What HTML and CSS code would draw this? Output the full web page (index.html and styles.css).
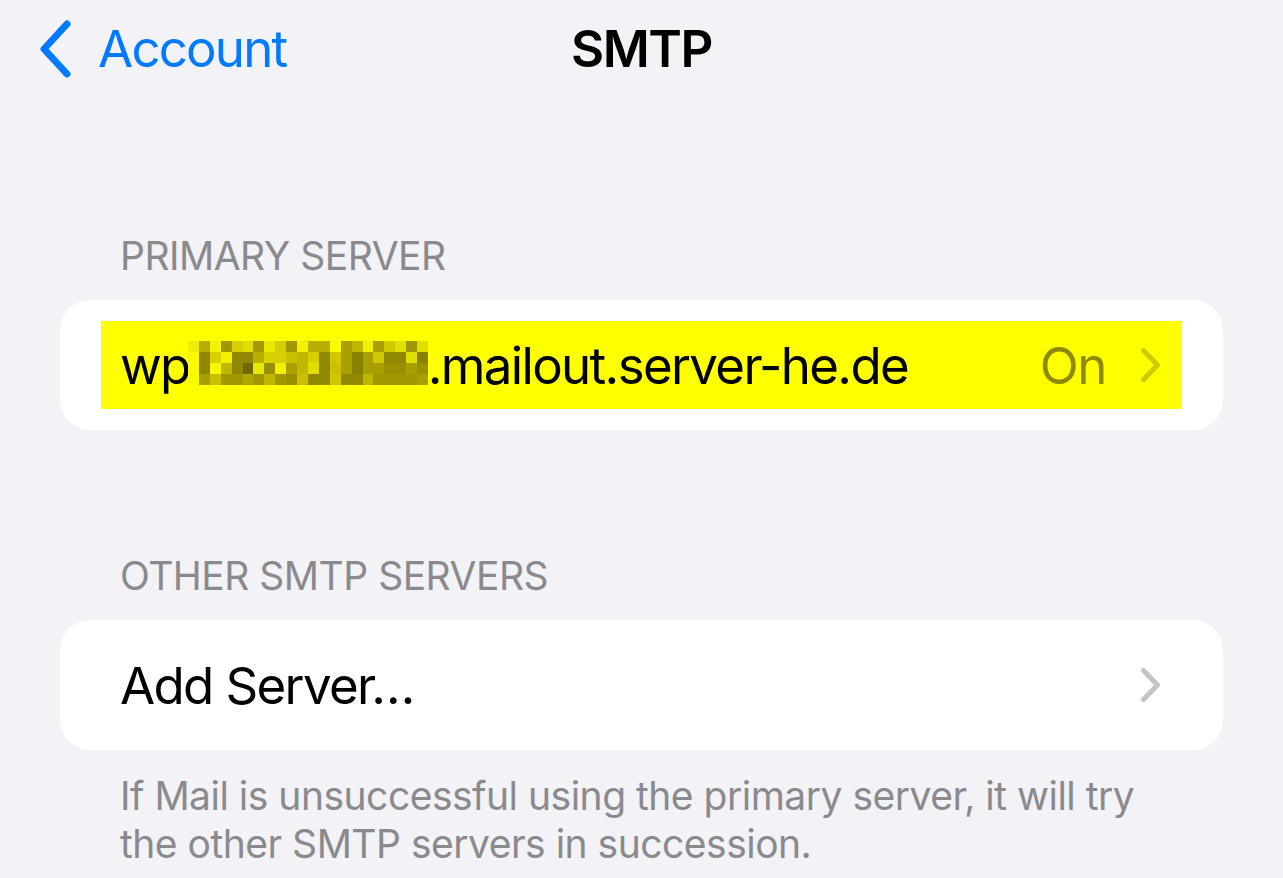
FILE: index.html
```html
<!doctype html>
<html lang="en">
<head>
    <meta charset="UTF-8">
    <meta name="viewport" content="width=device-width, initial-scale=1.0">
    <title>SMTP</title>
    <link rel="stylesheet" href="styles.css">
</head>
<body>
<div class="screen">
    <header class="nav">
        <a class="back">
            <svg class="back-icon" viewBox="0 0 36 58"><polyline points="30,4 7,29 30,54"/></svg>
            <span>Account</span>
        </a>
        <h1 class="title">SMTP</h1>
        <span></span>
    </header>

    <section class="group group-first">
        <h2 class="group-header">PRIMARY SERVER</h2>
        <div class="card">
            <div class="row row-marked">
                <span class="row-label">wp<svg class="redacted" viewBox="0 0 22 4" preserveAspectRatio="none">
                    <g>
                        <rect x="0" y="0" width="1" height="1" fill="#eeee00"/><rect x="1" y="0" width="1" height="1" fill="#b5ad00"/>
                        <rect x="2" y="0" width="1" height="1" fill="#f3f300"/><rect x="3" y="0" width="1" height="1" fill="#a09800"/>
                        <rect x="4" y="0" width="1" height="1" fill="#d8d000"/><rect x="5" y="0" width="1" height="1" fill="#e0e000"/>
                        <rect x="6" y="0" width="1" height="1" fill="#a09a00"/><rect x="7" y="0" width="1" height="1" fill="#e8e800"/>
                        <rect x="8" y="0" width="1" height="1" fill="#d5cc00"/><rect x="9" y="0" width="1" height="1" fill="#a09a00"/>
                        <rect x="10" y="0" width="1" height="1" fill="#f3f300"/><rect x="11" y="0" width="1" height="1" fill="#b8b000"/>
                        <rect x="12" y="0" width="1" height="1" fill="#b8b000"/><rect x="13" y="0" width="1" height="1" fill="#fbfb00"/>
                        <rect x="14" y="0" width="1" height="1" fill="#a8a000"/><rect x="15" y="0" width="1" height="1" fill="#c0b800"/>
                        <rect x="16" y="0" width="1" height="1" fill="#f0f000"/><rect x="17" y="0" width="1" height="1" fill="#a8a000"/>
                        <rect x="18" y="0" width="1" height="1" fill="#d0c800"/><rect x="19" y="0" width="1" height="1" fill="#e0e000"/>
                        <rect x="20" y="0" width="1" height="1" fill="#a09800"/><rect x="21" y="0" width="1" height="1" fill="#e0e000"/>
                    </g>
                    <g>
                        <rect x="0" y="1" width="1" height="1" fill="#fafa00"/><rect x="1" y="1" width="1" height="1" fill="#908800"/>
                        <rect x="2" y="1" width="1" height="1" fill="#d8d000"/><rect x="3" y="1" width="1" height="1" fill="#f0f000"/>
                        <rect x="4" y="1" width="1" height="1" fill="#908800"/><rect x="5" y="1" width="1" height="1" fill="#908800"/>
                        <rect x="6" y="1" width="1" height="1" fill="#b8b000"/><rect x="7" y="1" width="1" height="1" fill="#d8d000"/>
                        <rect x="8" y="1" width="1" height="1" fill="#d8d000"/><rect x="9" y="1" width="1" height="1" fill="#c8c000"/>
                        <rect x="10" y="1" width="1" height="1" fill="#c0b800"/><rect x="11" y="1" width="1" height="1" fill="#d8d000"/>
                        <rect x="12" y="1" width="1" height="1" fill="#908800"/><rect x="13" y="1" width="1" height="1" fill="#d0c800"/>
                        <rect x="14" y="1" width="1" height="1" fill="#a8a000"/><rect x="15" y="1" width="1" height="1" fill="#888000"/>
                        <rect x="16" y="1" width="1" height="1" fill="#a8a000"/><rect x="17" y="1" width="1" height="1" fill="#d0c800"/>
                        <rect x="18" y="1" width="1" height="1" fill="#908800"/><rect x="19" y="1" width="1" height="1" fill="#908800"/>
                        <rect x="20" y="1" width="1" height="1" fill="#e0e000"/><rect x="21" y="1" width="1" height="1" fill="#888000"/>
                    </g>
                    <g>
                        <rect x="0" y="2" width="1" height="1" fill="#fafa00"/><rect x="1" y="2" width="1" height="1" fill="#908800"/>
                        <rect x="2" y="2" width="1" height="1" fill="#f8f800"/><rect x="3" y="2" width="1" height="1" fill="#c0b800"/>
                        <rect x="4" y="2" width="1" height="1" fill="#908800"/><rect x="5" y="2" width="1" height="1" fill="#6e6800"/>
                        <rect x="6" y="2" width="1" height="1" fill="#e8e800"/><rect x="7" y="2" width="1" height="1" fill="#989000"/>
                        <rect x="8" y="2" width="1" height="1" fill="#f0f000"/><rect x="9" y="2" width="1" height="1" fill="#a8a000"/>
                        <rect x="10" y="2" width="1" height="1" fill="#c0b800"/><rect x="11" y="2" width="1" height="1" fill="#e0e000"/>
                        <rect x="12" y="2" width="1" height="1" fill="#908800"/><rect x="13" y="2" width="1" height="1" fill="#c8c000"/>
                        <rect x="14" y="2" width="1" height="1" fill="#a8a000"/><rect x="15" y="2" width="1" height="1" fill="#888000"/>
                        <rect x="16" y="2" width="1" height="1" fill="#a8a000"/><rect x="17" y="2" width="1" height="1" fill="#a8a000"/>
                        <rect x="18" y="2" width="1" height="1" fill="#989000"/><rect x="19" y="2" width="1" height="1" fill="#989000"/>
                        <rect x="20" y="2" width="1" height="1" fill="#a8a000"/><rect x="21" y="2" width="1" height="1" fill="#989000"/>
                    </g>
                    <g>
                        <rect x="0" y="3" width="1" height="1" fill="#fafa00"/><rect x="1" y="3" width="1" height="1" fill="#a8a000"/>
                        <rect x="2" y="3" width="1" height="1" fill="#c8c000"/><rect x="3" y="3" width="1" height="1" fill="#a09800"/>
                        <rect x="4" y="3" width="1" height="1" fill="#a09800"/><rect x="5" y="3" width="1" height="1" fill="#b0a800"/>
                        <rect x="6" y="3" width="1" height="1" fill="#a09800"/><rect x="7" y="3" width="1" height="1" fill="#c0b800"/>
                        <rect x="8" y="3" width="1" height="1" fill="#a09800"/><rect x="9" y="3" width="1" height="1" fill="#989000"/>
                        <rect x="10" y="3" width="1" height="1" fill="#c8c000"/><rect x="11" y="3" width="1" height="1" fill="#908800"/>
                        <rect x="12" y="3" width="1" height="1" fill="#908800"/><rect x="13" y="3" width="1" height="1" fill="#d0c800"/>
                        <rect x="14" y="3" width="1" height="1" fill="#908800"/><rect x="15" y="3" width="1" height="1" fill="#908800"/>
                        <rect x="16" y="3" width="1" height="1" fill="#c0b800"/><rect x="17" y="3" width="1" height="1" fill="#a09800"/>
                        <rect x="18" y="3" width="1" height="1" fill="#a09800"/><rect x="19" y="3" width="1" height="1" fill="#a09800"/>
                        <rect x="20" y="3" width="1" height="1" fill="#a09800"/><rect x="21" y="3" width="1" height="1" fill="#a8a000"/>
                    </g>
                </svg>.mailout.server-he.de</span>
                <span class="row-value">On</span>
                <svg class="chevron" viewBox="0 0 21 36"><polyline points="3.5,3.5 17.5,18 3.5,32.5"/></svg>
            </div>
        </div>
    </section>

    <section class="group group-second">
        <h2 class="group-header">OTHER SMTP SERVERS</h2>
        <div class="card">
            <div class="row">
                <span class="row-label">Add Server…</span>
                <svg class="chevron" viewBox="0 0 21 36"><polyline points="3.5,3.5 17.5,18 3.5,32.5"/></svg>
            </div>
        </div>
        <p class="group-footer">If Mail is unsuccessful using the primary server, it will try<br>the other SMTP servers in succession.</p>
    </section>
</div>
</body>
</html>
```

FILE: styles.css
```css
body{
    margin:0;
    background-color:#f2f2f7;
    font-family:Inter, "Liberation Sans", sans-serif;
    color:#000;
}

.screen{
    width:1283px;
    height:878px;
    overflow:hidden;
}

/* navigation bar */
.nav{
    display:grid;
    grid-template-columns:1fr auto 1fr;
    align-items:center;
    height:97px;
}
.back{
    display:flex;
    align-items:center;
    gap:25px;
    padding-left:37px;
    color:#007aff;
    font-size:51px;
    letter-spacing:-1.8px;
    cursor:pointer;
}
.back-icon{
    width:36px;
    height:58px;
    fill:none;
    stroke:#007aff;
    stroke-width:7;
    stroke-linecap:round;
    stroke-linejoin:round;
}
.title{
    margin:0;
    font-size:51px;
    font-weight:600;
    letter-spacing:-1.5px;
}

/* grouped list */
.group-header{
    margin:0 0 20px;
    padding:0 120px;
    font-size:39px;
    line-height:48px;
    font-weight:400;
    letter-spacing:-0.5px;
    color:#8a8a8e;
}
.group-first{
    margin-top:135px;
}
.group-second{
    margin-top:122px;
}
.card{
    box-sizing:border-box;
    height:130px;
    margin:0 60px;
    padding:21px 41px;
    background-color:#fff;
    border-radius:30px;
}
.row{
    display:flex;
    align-items:center;
    height:88px;
    padding:0 21px 0 19px;
}
.row-marked{
    background-color:#ffff00;
}
.row-label{
    flex:1;
    font-size:51px;
    letter-spacing:-1.65px;
    white-space:nowrap;
}
.row-value{
    margin-right:34px;
    font-size:51px;
    letter-spacing:-1.4px;
    color:#8c8a00;
}
.redacted{
    width:240px;
    height:44px;
    margin-left:-2px;
    vertical-align:-1px;
    shape-rendering:crispEdges;
}
.chevron{
    width:21px;
    height:36px;
    fill:none;
    stroke:#c4c4c7;
    stroke-width:5;
    stroke-linecap:round;
    stroke-linejoin:round;
}
.row-marked .chevron{
    stroke:#cccc00;
}
.group-footer{
    margin:22px 0 0;
    padding:0 120px;
    font-size:39px;
    line-height:48px;
    letter-spacing:-0.5px;
    color:#8a8a8e;
}
```
